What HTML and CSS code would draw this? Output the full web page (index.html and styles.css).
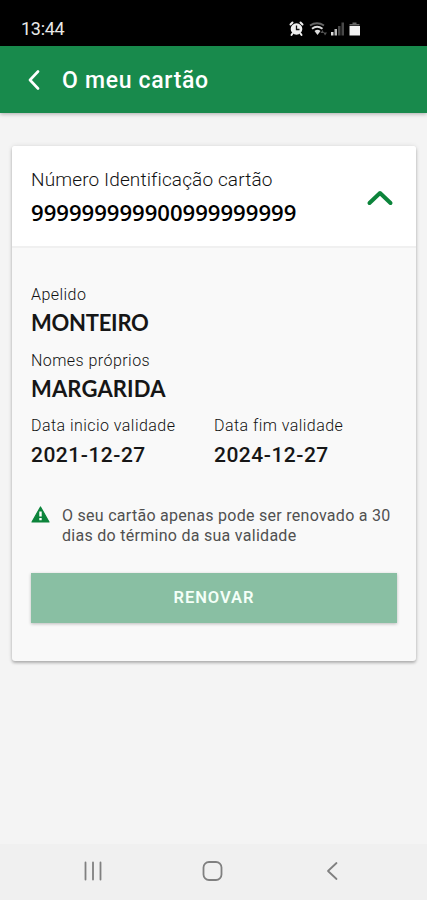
FILE: index.html
```html
<!DOCTYPE html>
<html lang="pt">
<head>
<meta charset="utf-8">
<title>O meu cartão</title>
<link rel="stylesheet" href="styles.css">
</head>
<body>
<div class="status">
  <span class="time">13:44</span>
  <svg class="status-icons" width="76" height="18" viewBox="0 0 76 18">
    <g fill="none" stroke="#eee" stroke-width="2" stroke-linecap="round"><path d="M2.500 4.500l2-2M12.500 2.500l2 2M4.500 13.500L3.500 15M12.500 13.500l1 1.500"/></g>
    <circle cx="8.500" cy="9" r="5.800" fill="#eee"/>
    <path d="M8.500 5.500v4h3" fill="none" stroke="#111" stroke-width="1.300"/>
    <g fill="none" stroke-width="1.900"><path d="M22 5.500q7-4.500 14 0" stroke="#666"/><path d="M24 8.700q5-4 10.500 0" stroke="#ddd"/></g>
    <path d="M26.500 11q3-2.500 6 0L29.500 15z" fill="#ddd"/>
    <path d="M32.500 13l2-3 1.500 3zM35.500 12.500h3.500l-2 3z" fill="#555"/>
    <path d="M43 12h2.500v3.500H43z" fill="#ddd"/><path d="M46.500 9H49v6.500h-2.500z" fill="#bbb"/><path d="M50 6h2.500v9.500H50zM53.500 2.500H56v13h-2.500z" fill="#484848"/>
    <path d="M61.500 5.500V4h3V2.500h4V4h3v1.500z" fill="#666"/><path d="M61.500 6h10.500v9.500H61.500z" fill="#f2f2f2"/>
  </svg>
</div>
<header class="bar">
  <svg class="back" width="14" height="20" viewBox="0 0 14 20"><path d="M12 1.500L4 10l8 8.500"/></svg>
  <h1>O meu cartão</h1>
</header>
<main>
  <section class="card">
    <div class="card-head">
      <div>
        <div class="head-label">Número Identificação cartão</div>
        <div class="number">999999999900999999999</div>
      </div>
      <svg class="chevron" width="28" height="18" viewBox="0 0 28 18"><path d="M3.500 14L14 4l10.500 10"/></svg>
    </div>
    <div class="card-body">
      <div class="field"><div class="label">Apelido</div><div class="value surname">MONTEIRO</div></div>
      <div class="field"><div class="label">Nomes próprios</div><div class="value given">MARGARIDA</div></div>
      <div class="dates">
        <div><div class="label">Data inicio validade</div><div class="date">2021-12-27</div></div>
        <div><div class="label">Data fim validade</div><div class="date">2024-12-27</div></div>
      </div>
      <div class="notice">
        <svg width="20" height="18" viewBox="0 0 20 18"><path d="M9.500 1L18 16H1z" fill="#0c843b" stroke="#0c843b" stroke-width="1.200" stroke-linejoin="round"/><path d="M9.500 5.500v5M9.500 12v2.300" stroke="#fff" stroke-width="2.400"/></svg>
        <p>O seu cartão apenas pode ser renovado a 30<br>dias do término da sua validade</p>
      </div>
      <button class="renew" disabled>RENOVAR</button>
    </div>
  </section>
</main>
<nav class="nav">
  <svg width="20" height="20" viewBox="0 0 20 20"><path d="M2.500 1.500v17M10 1.500v17M17.500 1.500v17"/></svg>
  <svg width="22" height="22" viewBox="0 0 22 22"><rect x="2.500" y="2" width="18" height="18" rx="5.500"/></svg>
  <svg width="14" height="20" viewBox="0 0 14 20"><path d="M11.500 2L3 10l8.500 8"/></svg>
</nav>
</body>
</html>
```
FILE: styles.css
```css
* { box-sizing: border-box; }
body {
  margin: 0;
  height: 900px;
  display: flex;
  flex-direction: column;
  background: #f4f4f4;
  color: #161616;
  font-family: Roboto, "Liberation Sans", sans-serif;
}
.status {
  height: 46px;
  display: flex;
  align-items: flex-start;
  justify-content: space-between;
  padding: 20px 63px 0 21px;
  background: #000;
}
.time { margin-top: -1px; font-size: 18px; line-height: 19px; color: #e8e8e8; letter-spacing: -0.3px; }
.status-icons { display: block; }
.bar {
  height: 67px;
  display: flex;
  align-items: center;
  padding: 1px 0 0 26px;
  background: #188a4c;
  box-shadow: 0 1px 4px rgba(0, 0, 0, 0.3);
}
.back, .chevron { fill: none; stroke-linecap: round; stroke-linejoin: round; }
.back { stroke: #fff; stroke-width: 2.6; margin-right: 22px; }
h1 { margin: 1px 0 0; font-size: 23px; line-height: 30px; font-weight: 500; color: #fff; letter-spacing: 0.68px; }
main { flex: 1; padding: 33px 11px 0 12px; }
.card {
  height: 515px;
  border-radius: 3px;
  background: #f9f9f9;
  box-shadow: 0 2px 3px rgba(0, 0, 0, 0.25), 0 0 5px rgba(0, 0, 0, 0.1);
}
.card-head {
  height: 102px;
  display: flex;
  justify-content: space-between;
  align-items: flex-start;
  padding: 21px 22px 0 19px;
  background: #fff;
  border-bottom: 2px solid #f0f0f0;
  border-radius: 3px 3px 0 0;
}
.head-label { font-size: 19px; line-height: 26px; color: #111; font-weight: 300; letter-spacing: 0.13px; white-space: nowrap; }
.number { margin-top: 3px; font: 600 22.1px/32px "Open Sans", sans-serif; color: #000; }
.chevron { margin-top: 22px; stroke: #0c843b; stroke-width: 4; }
.card-body { padding: 35px 19px 0; }
.field { height: 65.5px; }
.label { font-size: 16px; line-height: 24px; color: #111; font-weight: 300; letter-spacing: 0.45px; white-space: nowrap; }
.value { font: 700 22px/31px Lato, sans-serif; }
.surname { letter-spacing: -0.25px; }
.given { letter-spacing: 0.15px; }
.date { font-size: 21px; line-height: 34px; font-weight: 500; letter-spacing: 0.5px; }
.dates { display: grid; grid-template-columns: 183px 1fr; }
.notice { display: flex; margin-top: 34px; }
.notice svg { flex: none; margin-right: 11px; }
.notice p { margin: 0; font-size: 16px; line-height: 19.5px; color: #505050; letter-spacing: 0.28px; white-space: nowrap; }
.renew {
  display: block;
  width: 100%;
  height: 50px;
  margin-top: 28px;
  padding: 0;
  border: 0;
  background: #89bfa3;
  color: #f4fff8;
  font: 600 16.5px/48px Roboto, sans-serif;
  letter-spacing: 0.95px;
  box-shadow: 0 1px 3px rgba(0, 0, 0, 0.25);
}
.nav {
  height: 56px;
  display: flex;
  align-items: center;
  padding: 0 0 2px 83px;
  background: #f0f0f0;
}
.nav svg { fill: none; stroke: #808080; stroke-width: 1.8; stroke-linecap: round; stroke-linejoin: round; }
.nav svg + svg { margin-left: 98px; }
.nav svg:last-child { margin-left: 102px; }
```
